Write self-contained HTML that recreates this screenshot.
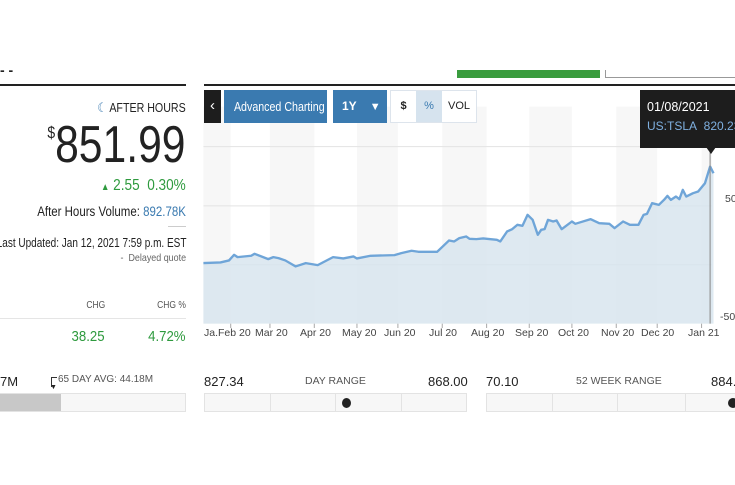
<!DOCTYPE html>
<html><head><style>
*{margin:0;padding:0;box-sizing:border-box}
body{width:735px;height:485px;background:#fff;position:relative;overflow:hidden;font-family:"Liberation Sans",sans-serif;color:#222}
.a{position:absolute;white-space:nowrap}
.r{text-align:right;transform-origin:right center}
.g{color:#2e9a3e}
</style></head><body>
<svg class="a" style="left:200px;top:96px" width="535" height="239" viewBox="0 -132 1568 718" preserveAspectRatio="none">
<g fill="#f7f7f7">
<rect x="10" y="-100" width="80" height="652"/>
<rect x="205" y="-100" width="130" height="652"/><rect x="460" y="-100" width="120" height="652"/><rect x="710" y="-100" width="130" height="652"/><rect x="965" y="-100" width="125" height="652"/><rect x="1220" y="-100" width="120" height="652"/><rect x="1470" y="-100" width="30" height="652"/>
</g>
<g stroke="#e3e3e3" stroke-width="3"><line x1="10" y1="20" x2="1500" y2="20"/><line x1="10" y1="198" x2="1500" y2="198"/><line x1="10" y1="375" x2="1500" y2="375"/></g>
<path d="M10 370 L60 368 L85 362 L100 345 L110 352 L150 348 L160 342 L200 358 L215 352 L230 355 L250 362 L280 380 L310 370 L345 376 L390 352 L420 356 L450 350 L460 356 L500 348 L570 346 L590 340 L620 333 L640 336 L695 336 L730 302 L745 305 L760 295 L780 290 L790 297 L810 298 L830 296 L870 300 L880 305 L900 275 L915 268 L930 255 L945 258 L960 225 L975 240 L990 285 L1000 270 L1010 268 L1020 240 L1035 245 L1045 242 L1060 268 L1090 245 L1100 252 L1145 238 L1170 250 L1200 252 L1215 265 L1240 245 L1260 255 L1285 255 L1300 225 L1310 222 L1325 190 L1345 195 L1360 180 L1370 168 L1380 180 L1395 170 L1405 178 L1415 150 L1425 170 L1445 160 L1460 155 L1480 130 L1495 80 L1505 100 L1505 552 L10 552 Z" fill="#d6e3ed" fill-opacity="0.8" stroke="none"/>
<path d="M10 370 L60 368 L85 362 L100 345 L110 352 L150 348 L160 342 L200 358 L215 352 L230 355 L250 362 L280 380 L310 370 L345 376 L390 352 L420 356 L450 350 L460 356 L500 348 L570 346 L590 340 L620 333 L640 336 L695 336 L730 302 L745 305 L760 295 L780 290 L790 297 L810 298 L830 296 L870 300 L880 305 L900 275 L915 268 L930 255 L945 258 L960 225 L975 240 L990 285 L1000 270 L1010 268 L1020 240 L1035 245 L1045 242 L1060 268 L1090 245 L1100 252 L1145 238 L1170 250 L1200 252 L1215 265 L1240 245 L1260 255 L1285 255 L1300 225 L1310 222 L1325 190 L1345 195 L1360 180 L1370 168 L1380 180 L1395 170 L1405 178 L1415 150 L1425 170 L1445 160 L1460 155 L1480 130 L1495 80 L1505 100" fill="none" stroke="#6fa5d8" stroke-width="7" stroke-linejoin="round"/>
<line x1="1495" y1="30" x2="1495" y2="552" stroke="#888" stroke-width="3"/>
<g stroke="#aaa" stroke-width="3"><line x1="90" y1="552" x2="90" y2="565"/><line x1="205" y1="552" x2="205" y2="565"/><line x1="335" y1="552" x2="335" y2="565"/><line x1="460" y1="552" x2="460" y2="565"/><line x1="580" y1="552" x2="580" y2="565"/><line x1="710" y1="552" x2="710" y2="565"/><line x1="840" y1="552" x2="840" y2="565"/><line x1="965" y1="552" x2="965" y2="565"/><line x1="1090" y1="552" x2="1090" y2="565"/><line x1="1220" y1="552" x2="1220" y2="565"/><line x1="1340" y1="552" x2="1340" y2="565"/><line x1="1470" y1="552" x2="1470" y2="565"/></g>
</svg>

<div class="a" style="left:0;top:62px;font-size:14px;font-weight:bold">- -</div>
<div class="a" style="left:0;top:84px;width:186px;height:2px;background:#222"></div>
<div class="a" style="left:204px;top:84px;width:531px;height:2px;background:#222"></div>
<div class="a" style="left:457px;top:70px;width:143px;height:8px;background:#3a9c3e"></div>
<div class="a" style="left:605px;top:70px;width:130px;height:8px;border-left:1px solid #999;border-bottom:1px solid #999"></div>

<div class="a r" style="right:549px;top:100px;font-size:13px;transform:scaleX(.82)"><span style="color:#3a7ab0">&#9790;</span> AFTER HOURS</div>
<div class="a r" style="right:549px;top:100px;font-size:52px;line-height:66px;transform:scaleX(.82)"><sup style="font-size:17px;vertical-align:24px">$</sup>851.99</div>
<div class="a r g" style="right:549px;top:177px;font-size:16px;transform:scaleX(.85)"><span style="font-size:10px">&#9650;</span> 2.55&nbsp; 0.30%</div>
<div class="a r" style="right:549px;top:204px;font-size:13.5px;transform:scaleX(.85)">After Hours Volume: <span style="color:#3a7ab0">892.78K</span></div>
<div class="a" style="left:168px;top:226px;width:18px;height:1px;background:#ccc"></div>
<div class="a r" style="right:549px;top:235px;font-size:13px;transform:scaleX(.77)">Last Updated: Jan 12, 2021 7:59 p.m. EST</div>
<div class="a r" style="right:549px;top:252px;font-size:10.5px;color:#666;transform:scaleX(.85)">-&nbsp; Delayed quote</div>
<div class="a r" style="right:630px;top:300px;font-size:10px;color:#555;transform:scaleX(.85)">CHG</div>
<div class="a r" style="right:549px;top:300px;font-size:10px;color:#555;transform:scaleX(.85)">CHG %</div>
<div class="a" style="left:0;top:318px;width:186px;height:1px;background:#e5e5e5"></div>
<div class="a r g" style="right:630px;top:328px;font-size:15px;transform:scaleX(.88)">38.25</div>
<div class="a r g" style="right:549px;top:328px;font-size:15px;transform:scaleX(.88)">4.72%</div>

<div class="a" style="left:204px;top:90px;width:17px;height:33px;background:#1d1d1d;color:#fff;font-size:15px;text-align:center;line-height:31px">&lsaquo;</div>
<div class="a" style="left:224px;top:90px;width:103px;height:33px;background:#3a7ab0;color:#fff;font-size:13px;text-align:center;line-height:33px"><span style="display:inline-block;transform:scaleX(.82)">Advanced Charting</span></div>
<div class="a" style="left:333px;top:90px;width:54px;height:33px;background:#3a7ab0;color:#fff;font-size:12px;font-weight:bold;line-height:33px;padding-left:9px">1Y <span style="margin-left:10px;font-size:11px">&#9660;</span></div>
<div class="a" style="left:390px;top:90px;width:87px;height:33px;border:1px solid #dde4ec;background:#fff"></div>
<div class="a" style="left:391px;top:91px;width:25px;height:31px;font-size:11px;font-weight:bold;text-align:center;line-height:31px">$</div>
<div class="a" style="left:416px;top:91px;width:26px;height:31px;background:#d6e3ee;color:#3a7ab0;font-size:11px;text-align:center;line-height:31px">%</div>
<div class="a" style="left:442px;top:91px;width:34px;height:31px;font-size:11px;text-align:center;line-height:31px">VOL</div>

<div class="a" style="left:204px;top:327px;font-size:10.5px;color:#444">
<span class="a" style="left:0">Ja.Feb 20</span><span class="a" style="left:51px">Mar 20</span><span class="a" style="left:96px">Apr 20</span><span class="a" style="left:138px">May 20</span><span class="a" style="left:180px">Jun 20</span><span class="a" style="left:225px">Jul 20</span><span class="a" style="left:267px">Aug 20</span><span class="a" style="left:311px">Sep 20</span><span class="a" style="left:354px">Oct 20</span><span class="a" style="left:397px">Nov 20</span><span class="a" style="left:437px">Dec 20</span><span class="a" style="left:484px">Jan 21</span></div>
<div class="a" style="left:725px;top:193px;font-size:10.5px;color:#444">50</div>
<div class="a" style="left:720px;top:311px;font-size:10.5px;color:#444">-50</div>

<div class="a" style="left:640px;top:90px;width:100px;height:58px;background:#1d1d1d;color:#fff;padding:10px 0 0 7px;font-size:12.5px">01/08/2021<div style="color:#7fb0e0;margin-top:5px;font-size:12px">US:TSLA&nbsp; 820.235</div></div>
<div class="a" style="left:706px;top:147px;width:0;height:0;border-left:5px solid transparent;border-right:5px solid transparent;border-top:7px solid #1d1d1d"></div>

<div class="a" style="left:0;top:374px;font-size:13px">7M</div>
<div class="a" style="left:51px;top:377px;width:6px;height:10px;border-left:1px solid #333;border-top:1px solid #333"></div>
<div class="a" style="left:50px;top:384px;font-size:7px">&#9660;</div>
<div class="a" style="left:58px;top:374px;font-size:10px;color:#555">65 DAY AVG: 44.18M</div>
<div class="a" style="left:0;top:393px;width:186px;height:19px;border:1px solid #e3e3e3;background:#f7f7f7"></div>
<div class="a" style="left:0;top:394px;width:61px;height:17px;background:#c8c8c8"></div>

<div class="a" style="left:204px;top:374px;font-size:13px">827.34</div>
<div class="a" style="left:305px;top:375px;font-size:10.5px;color:#555">DAY RANGE</div>
<div class="a" style="left:428px;top:374px;font-size:13px">868.00</div>
<div class="a" style="left:204px;top:393px;width:263px;height:19px;border:1px solid #e3e3e3;background:#f7f7f7"></div>
<div class="a" style="left:270px;top:393px;width:66px;height:19px;border-left:1px solid #e3e3e3;border-right:1px solid #e3e3e3"></div>
<div class="a" style="left:401px;top:393px;width:1px;height:19px;background:#e3e3e3"></div>
<div class="a" style="left:342px;top:398px;width:9px;height:10px;border-radius:50%;background:#222"></div>

<div class="a" style="left:486px;top:374px;font-size:13px">70.10</div>
<div class="a" style="left:576px;top:375px;font-size:10.5px;color:#555">52 WEEK RANGE</div>
<div class="a" style="left:711px;top:374px;font-size:13px">884.</div>
<div class="a" style="left:486px;top:393px;width:260px;height:19px;border:1px solid #e3e3e3;background:#f7f7f7"></div>
<div class="a" style="left:552px;top:393px;width:66px;height:19px;border-left:1px solid #e3e3e3;border-right:1px solid #e3e3e3"></div>
<div class="a" style="left:685px;top:393px;width:1px;height:19px;background:#e3e3e3"></div>
<div class="a" style="left:728px;top:398px;width:10px;height:10px;border-radius:50%;background:#222"></div>
</body></html>
